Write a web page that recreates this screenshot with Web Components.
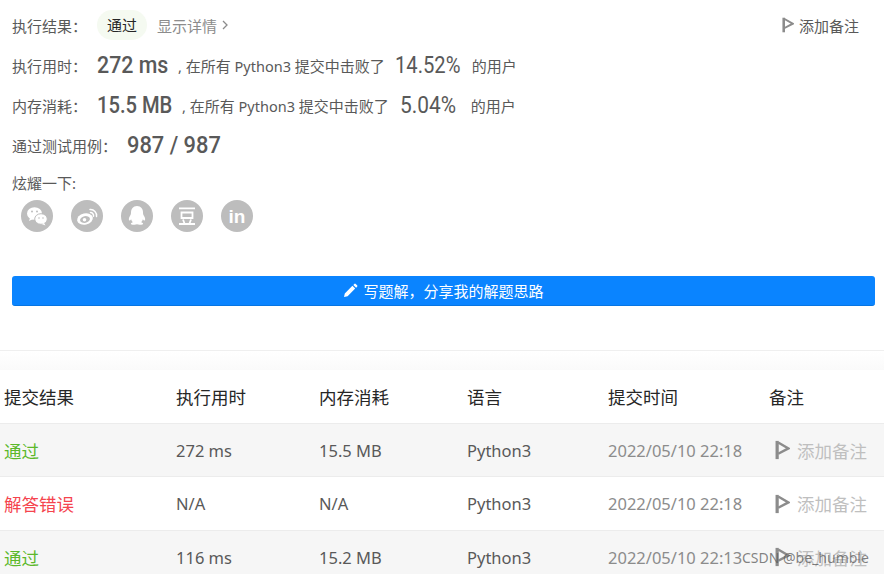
<!DOCTYPE html>
<html lang="zh">
<head>
<meta charset="utf-8">
<title>提交结果</title>
<style>
  html, body { margin: 0; padding: 0; background: #fff; }
  body {
    width: 884px; height: 574px; overflow: hidden; position: relative;
    font-family: "Noto Sans", "Noto Sans CJK SC", sans-serif;
    color: #595959;
  }
  /* latin runs are set a bit smaller than the CJK around them */
  .lat { font-size: 14.5px; }
</style>
</head>
<body>
<result-panel></result-panel>
<submit-table></submit-table>
<water-mark>CSDN @be_humble</water-mark>

<script>
const FLAG = (w, h, c) => `<svg width="${w}" height="${h}" viewBox="0 0 14 18" style="display:block;flex:none"><path d="M2 .5v17" stroke="${c}" stroke-width="3" fill="none"/><path d="M3 2 12.500 7.500 3 12.500" stroke="${c}" stroke-width="2.300" fill="none"/></svg>`;

class StatRow extends HTMLElement {
  constructor() {
    super();
    this.attachShadow({ mode: "open" });
    this.shadowRoot.innerHTML = `
      <style>
        :host { display: flex; align-items: center; height: 40px; font-size: 15px; white-space: nowrap; }
        .label { width: var(--label-w, 85px); flex: none; }
        .big, .pct {
          display: inline-block; flex: none; font-family: Roboto, "Noto Sans", sans-serif; font-size: 24px;
          transform-origin: left center; white-space: nowrap;
        }
        .big { width: var(--big-w); transform: scaleX(var(--big-sx)); font-weight: 500; }
        .pct { width: var(--pct-w); transform: scaleX(var(--pct-sx)); font-weight: 400; margin: 0 var(--pct-mr, 11px) 0 var(--pct-ml, 10px); }
        ::slotted([slot=mid]) { margin-left: var(--mid-ml, 8px); }
      </style>
      <span class="label"><slot name="label"></slot></span>
      <span class="big"><slot name="big"></slot></span>
      <slot name="mid"></slot>
      <span class="pct"><slot name="pct"></slot></span>
      <slot name="tail"></slot>
    `;
  }
}
customElements.define("stat-row", StatRow);

class ShareIcon extends HTMLElement {
  constructor() {
    super();
    this.attachShadow({ mode: "open" });
  }
  connectedCallback() {
    const icons = {
      wechat: `<ellipse cx="13.5" cy="13.5" rx="7.5" ry="6.3" fill="#fff"/><path d="M9 18l-1 3 4-2z" fill="#fff"/><ellipse cx="20" cy="19" rx="6.3" ry="5.3" fill="#fff" stroke="#bdbdbd" stroke-width="1"/><path d="M23 23l1.500 2.500-4-1.500z" fill="#fff"/><circle cx="11" cy="11.500" r="1" fill="#bdbdbd"/><circle cx="16" cy="11.500" r="1" fill="#bdbdbd"/><circle cx="18" cy="18" r=".8" fill="#bdbdbd"/><circle cx="22" cy="18" r=".8" fill="#bdbdbd"/>`,
      weibo: `<ellipse cx="14" cy="19" rx="8" ry="5.600" fill="#fff" transform="rotate(-12 14 19)"/><ellipse cx="14" cy="19.500" rx="5" ry="3.400" fill="#bdbdbd" transform="rotate(-12 14 19.500)"/><circle cx="13.500" cy="19.700" r="1.800" fill="#fff"/><path d="M19 9.500a6 6 0 0 1 6.500 7M19.500 12.600a3 3 0 0 1 3 3.600" stroke="#fff" stroke-width="1.500" fill="none" stroke-linecap="round"/>`,
      qq: `<path d="M16 6c-4 0-6 3-6 6.500 0 1.500-.3 2.300-1.200 3.800-1 1.800-1.300 3.700-.5 4.200.5.300 1.200-.3 1.800-1.300.3 1.300 1 2.300 1.800 3-1.300.4-2 1-2 1.500 0 .9 2 1.300 3.500 1.100 1-.1 1.800-.5 2.600-.5s1.600.4 2.600.5c1.500.2 3.500-.2 3.500-1.100 0-.5-.7-1.100-2-1.500.8-.7 1.500-1.700 1.800-3 .6 1 1.300 1.600 1.800 1.300.8-.5.500-2.400-.5-4.200-.9-1.500-1.200-2.300-1.200-3.800C22 9 20 6 16 6z" fill="#fff"/>`,
      douban: `<path d="M8 8.300h16M10.500 12.500h11v5.500h-11zM8 24h16M12 19.500l1.500 4M20 19.500l-1.500 4" stroke="#fff" stroke-width="1.800" fill="none"/>`,
      linkedin: `<text x="16" y="22.500" text-anchor="middle" font-family="Liberation Sans, sans-serif" font-weight="700" font-size="19" fill="#fff">in</text>`
    };
    this.shadowRoot.innerHTML = `
      <style>
        :host { display: block; width: 32px; height: 32px; }
        svg { display: block; }
      </style>
      <svg width="32" height="32" viewBox="0 0 32 32"><circle cx="16" cy="16" r="16" fill="#bdbdbd"/>${icons[this.getAttribute("kind")] || ""}</svg>
    `;
  }
}
customElements.define("share-icon", ShareIcon);

class WriteButton extends HTMLElement {
  constructor() {
    super();
    this.attachShadow({ mode: "open" });
    this.shadowRoot.innerHTML = `
      <style>
        :host { display: block; }
        button {
          all: unset; box-sizing: border-box; width: 100%; height: 30px;
          display: flex; align-items: center; justify-content: center; gap: 5px;
          background: #0a84ff; border-bottom: 1px solid #0775e2; border-radius: 3px;
          color: #fff; font-size: 15px; cursor: pointer;
        }
      </style>
      <button>
        <svg width="15" height="15" viewBox="0 0 15 15"><path d="M1 14l.8-3.600 7.600-7.600 2.800 2.800-7.600 7.600zM10.300 1.900l1-1a1 1 0 0 1 1.400 0l1.400 1.400a1 1 0 0 1 0 1.400l-1 1z" fill="#fff"/></svg>
        <slot></slot>
      </button>
    `;
  }
}
customElements.define("write-button", WriteButton);

class ResultPanel extends HTMLElement {
  constructor() {
    super();
    this.attachShadow({ mode: "open" });
    this.shadowRoot.innerHTML = `
      <style>
        :host { display: block; height: 351px; box-sizing: border-box; padding: 5px 9px 0 12px; border-bottom: 1px solid #efefef; }
        .top { display: flex; align-items: center; height: 40px; font-size: 15px; }
        .top .label { width: 85px; }
        .pill { width: 50px; height: 30px; line-height: 30px; border-radius: 15px; background: #f5faf1; color: #262626; text-align: center; }
        .detail { margin-left: 10px; color: #8c8c8c; display: flex; align-items: center; gap: 5px; }
        .note { margin-left: auto; margin-right: 16px; display: flex; align-items: center; gap: 5px; }
        .share { margin-top: 8px; font-size: 15px; line-height: 20px; }
        .icons { display: flex; gap: 18px; padding: 7px 0 0 9px; }
        write-button { margin-top: 44px; }
        .lat { font-size: 14.500px; }
      </style>
      <div class="top">
        <span class="label">执行结果：</span>
        <span class="pill">通过</span>
        <span class="detail">显示详情
          <svg width="6" height="10" viewBox="0 0 6 10"><path d="M1 1l4 4-4 4" stroke="#8c8c8c" stroke-width="1.300" fill="none"/></svg>
        </span>
        <span class="note">${FLAG(12, 16, "#8c8c8c")}添加备注</span>
      </div>
      <stat-row style="--big-w:73px;--big-sx:.89;--pct-w:66px;--pct-sx:.84">
        <span slot="label">执行用时：</span>
        <span slot="big">272 ms</span>
        <span slot="mid"><span class="lat">, </span>在所有 <span class="lat">Python3</span> 提交中击败了</span>
        <span slot="pct">14.52%</span>
        <span slot="tail">的用户</span>
      </stat-row>
      <stat-row style="--big-w:76px;--big-sx:.84;--pct-w:59px;--pct-sx:.87;--mid-ml:9px;--pct-ml:11px;--pct-mr:12px">
        <span slot="label">内存消耗：</span>
        <span slot="big">15.5 MB</span>
        <span slot="mid"><span class="lat">, </span>在所有 <span class="lat">Python3</span> 提交中击败了</span>
        <span slot="pct">5.04%</span>
        <span slot="tail">的用户</span>
      </stat-row>
      <stat-row style="--label-w:115px;--big-w:93px;--big-sx:.91">
        <span slot="label">通过测试用例：</span>
        <span slot="big">987 / 987</span>
      </stat-row>
      <div class="share">炫耀一下:</div>
      <div class="icons">
        <share-icon kind="wechat"></share-icon>
        <share-icon kind="weibo"></share-icon>
        <share-icon kind="qq"></share-icon>
        <share-icon kind="douban"></share-icon>
        <share-icon kind="linkedin"></share-icon>
      </div>
      <write-button>写题解，分享我的解题思路</write-button>
    `;
  }
}
customElements.define("result-panel", ResultPanel);

class SubmitRow extends HTMLElement {
  constructor() {
    super();
    this.attachShadow({ mode: "open" });
  }
  connectedCallback() {
    const head = this.hasAttribute("head");
    const cells = (this.getAttribute("cells") || "").split("|");
    const state = this.getAttribute("state") || "";
    const color = state === "ok" ? "#5cb82a" : state === "bad" ? "#f5444e" : "";
    const note = head ? "备注" : `<span class="note">${FLAG(15, 20, "#8c8c8c")}添加备注</span>`;
    const cls = head ? "" : "lat";
    this.shadowRoot.innerHTML = `
      <style>
        :host {
          display: grid; grid-template-columns: 172px 143px 148px 141px 161px 111px;
          align-items: center; box-sizing: border-box; height: 53.700px;
          padding-left: 4px; font-size: 17.500px; white-space: nowrap;
          border-bottom: 1px solid #ececec;
          color: #595959;
        }
        :host([head]) { color: #262626; }
        :host([striped]) { background: #f6f6f6; }
        .lat { font-size: 16.500px; }
        .time { color: #8c8c8c; }
        .note { display: flex; align-items: center; gap: 7px; color: #bfbfbf; margin-left: 6px; }
      </style>
      <span style="${color ? "color:" + color : ""}">${cells[0]}</span>
      <span class="${cls}">${cells[1]}</span>
      <span class="${cls}">${cells[2]}</span>
      <span class="${cls}">${cells[3]}</span>
      <span class="${head ? "" : "lat time"}">${cells[4]}</span>
      <span>${note}</span>
    `;
  }
}
customElements.define("submit-row", SubmitRow);

class SubmitTable extends HTMLElement {
  constructor() {
    super();
    this.attachShadow({ mode: "open" });
    this.shadowRoot.innerHTML = `
      <style>
        :host { display: block; }
        .fade { height: 19px; background: linear-gradient(#fff, #fafafa); }
      </style>
      <div class="fade"></div>
      <submit-row head cells="提交结果|执行用时|内存消耗|语言|提交时间"></submit-row>
      <submit-row striped state="ok" cells="通过|272 ms|15.5 MB|Python3|2022/05/10 22:18"></submit-row>
      <submit-row state="bad" cells="解答错误|N/A|N/A|Python3|2022/05/10 22:18"></submit-row>
      <submit-row striped state="ok" cells="通过|116 ms|15.2 MB|Python3|2022/05/10 22:13"></submit-row>
    `;
  }
}
customElements.define("submit-table", SubmitTable);

class WaterMark extends HTMLElement {
  constructor() {
    super();
    this.attachShadow({ mode: "open" });
    this.shadowRoot.innerHTML = `
      <style>
        :host { position: absolute; left: 742px; top: 548px; font-size: 14px; line-height: 20px; color: rgba(90,90,90,.75); white-space: nowrap; }
      </style>
      <slot></slot>
    `;
  }
}
customElements.define("water-mark", WaterMark);
</script>
</body>
</html>
